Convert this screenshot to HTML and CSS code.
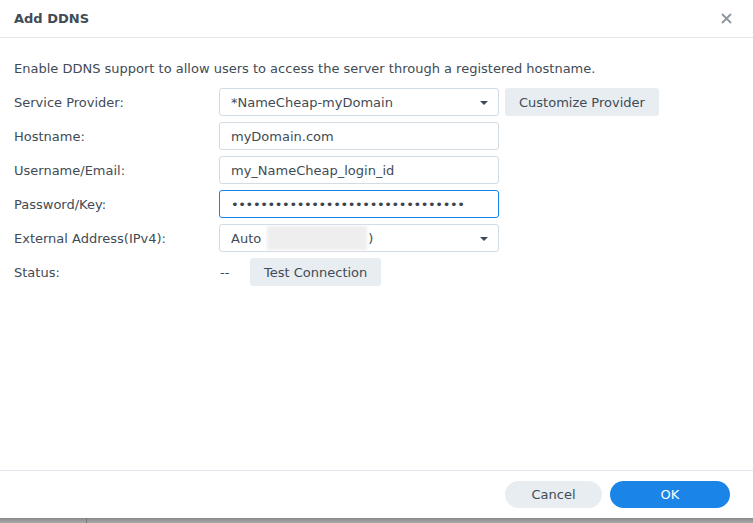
FILE: index.html
```html
<!DOCTYPE html>
<html lang="en">
<head>
    <meta charset="UTF-8">
    <title>Add DDNS</title>
    <link rel="stylesheet" href="styles.css">
</head>
<body>

<div class="dialog">
    <div class="dialog-header">
        <span class="title">Add DDNS</span>
        <span class="close">
            <svg width="11" height="11" viewBox="0 0 11 11"><path d="M1 1L10 10M10 1L1 10" stroke="#8e969e" stroke-width="1.8"/></svg>
        </span>
    </div>

    <div class="dialog-body">
        <p class="desc">Enable DDNS support to allow users to access the server through a registered hostname.</p>

        <div class="row">
            <label>Service Provider:</label>
            <div class="field select">*NameCheap-myDomain<span class="caret"></span></div>
            <button class="btn">Customize Provider</button>
        </div>
        <div class="row">
            <label>Hostname:</label>
            <div class="field">myDomain.com</div>
        </div>
        <div class="row">
            <label>Username/Email:</label>
            <div class="field">my_NameCheap_login_id</div>
        </div>
        <div class="row">
            <label>Password/Key:</label>
            <div class="field focus dots">••••••••••••••••••••••••••••••••</div>
        </div>
        <div class="row">
            <label>External Address(IPv4):</label>
            <div class="field select">Auto <span class="mask"></span>)<span class="caret"></span></div>
        </div>
        <div class="row">
            <label>Status:</label>
            <span class="status">--</span>
            <button class="btn">Test Connection</button>
        </div>
    </div>

    <div class="dialog-footer">
        <button class="pill cancel">Cancel</button>
        <button class="pill ok">OK</button>
    </div>
</div>
<div class="backdrop"><span class="divider"></span></div>

</body>
</html>
```

FILE: styles.css
```css
body {
    margin: 0;
    font-family: "DejaVu Sans", Verdana, sans-serif;
    font-size: 13px;
    color: #414b55;
    background: #fff;
}
.dialog {
    height: 518px;
    display: flex;
    flex-direction: column;
    background: #fff;
}
.dialog-header {
    height: 37px;
    border-bottom: 1px solid #e3e8ee;
    display: flex;
    align-items: center;
    justify-content: space-between;
    padding: 0 21px 0 14px;
}
.title {
    font-weight: bold;
    font-size: 13px;
}
.close {
    display: flex;
}
.dialog-body {
    flex: 1;
    padding: 0 14px;
}
.desc {
    margin: 23px 0 11px;
    line-height: 16px;
}
.row {
    display: flex;
    align-items: center;
    height: 28px;
    margin-bottom: 6px;
}
.row label {
    width: 205px;
}
.field {
    width: 267px;
    height: 26px;
    border: 1px solid #d3dbe3;
    border-radius: 3px;
    padding: 0 0 0 11px;
    display: flex;
    align-items: center;
    position: relative;
}
.field.focus {
    border-color: #1a82e8;
}
.dots {
    letter-spacing: -0.37px;
    color: #3c444c;
}
.caret {
    position: absolute;
    right: 10px;
    top: 12px;
    border-left: 4px solid transparent;
    border-right: 4px solid transparent;
    border-top: 4px solid #414b55;
}
.mask {
    display: inline-block;
    width: 100px;
    height: 24px;
    margin: 0 1px 0 6px;
    background: #eeeeee;
    filter: blur(1.5px);
}
.btn {
    margin-left: 6px;
    height: 28px;
    padding: 0 14px;
    border: none;
    border-radius: 3px;
    background: #e8edf2;
    color: #414b55;
    font-family: inherit;
    font-size: 13px;
}
.status {
    width: 24px;
    padding-left: 1px;
}
.dialog-footer {
    height: 47px;
    border-top: 1px solid #e3e8ee;
    display: flex;
    justify-content: flex-end;
    align-items: center;
    gap: 8px;
    padding-right: 23px;
}
.pill {
    height: 27px;
    border: none;
    border-radius: 14px;
    font-family: inherit;
    font-size: 13px;
}
.cancel {
    width: 97px;
    background: #e8edf2;
    color: #414b55;
}
.ok {
    width: 120px;
    background: #1b84e7;
    color: #fff;
}
.backdrop {
    height: 5px;
    background: linear-gradient(#8a8a8a, #a8a8a8);
    position: relative;
}
.divider {
    position: absolute;
    left: 86px;
    top: 0;
    width: 1px;
    height: 5px;
    background: #777;
}
```
